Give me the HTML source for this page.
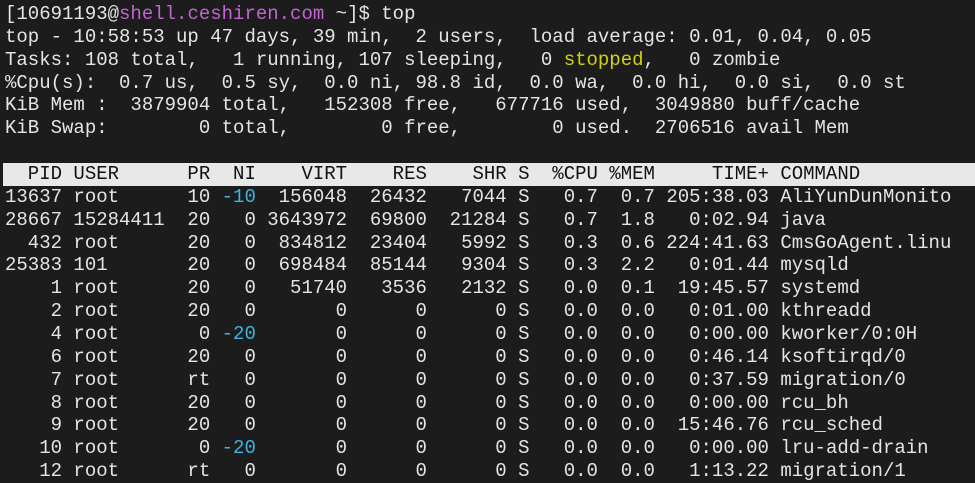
<!DOCTYPE html>
<html><head><meta charset="utf-8"><style>
html,body{margin:0;padding:0;background:#1c1c1c;width:975px;height:465px;overflow:hidden}
pre{margin:0;position:absolute;left:5px;top:3px;font-family:"Liberation Mono","DejaVu Sans Mono",monospace;font-size:19px;line-height:22.86px;color:#e4e4e4;white-space:pre}
.p{color:#c463d4}.y{color:#d4d400}.c{color:#3cb4e4}
.h{display:inline-block;background:#e8e8e8;color:#111;width:972px;margin-left:-2px;padding-left:2px}
</style></head><body>
<pre>[10691193@<span class="p">shell.ceshiren.com</span> ~]$ top
top - 10:58:53 up 47 days, 39 min,  2 users,  load average: 0.01, 0.04, 0.05
Tasks: 108 total,   1 running, 107 sleeping,   0 <span class="y">stopped</span>,   0 zombie
%Cpu(s):  0.7 us,  0.5 sy,  0.0 ni, 98.8 id,  0.0 wa,  0.0 hi,  0.0 si,  0.0 st
KiB Mem :  3879904 total,   152308 free,   677716 used,  3049880 buff/cache
KiB Swap:        0 total,        0 free,        0 used.  2706516 avail Mem

<span class="h">  PID USER      PR  NI    VIRT    RES    SHR S  %CPU %MEM     TIME+ COMMAND</span>
13637 root      10 <span class="c">-10</span>  156048  26432   7044 S   0.7  0.7 205:38.03 AliYunDunMonito
28667 15284411  20   0 3643972  69800  21284 S   0.7  1.8   0:02.94 java
  432 root      20   0  834812  23404   5992 S   0.3  0.6 224:41.63 CmsGoAgent.linu
25383 101       20   0  698484  85144   9304 S   0.3  2.2   0:01.44 mysqld
    1 root      20   0   51740   3536   2132 S   0.0  0.1  19:45.57 systemd
    2 root      20   0       0      0      0 S   0.0  0.0   0:01.00 kthreadd
    4 root       0 <span class="c">-20</span>       0      0      0 S   0.0  0.0   0:00.00 kworker/0:0H
    6 root      20   0       0      0      0 S   0.0  0.0   0:46.14 ksoftirqd/0
    7 root      rt   0       0      0      0 S   0.0  0.0   0:37.59 migration/0
    8 root      20   0       0      0      0 S   0.0  0.0   0:00.00 rcu_bh
    9 root      20   0       0      0      0 S   0.0  0.0  15:46.76 rcu_sched
   10 root       0 <span class="c">-20</span>       0      0      0 S   0.0  0.0   0:00.00 lru-add-drain
   12 root      rt   0       0      0      0 S   0.0  0.0   1:13.22 migration/1
</pre>
</body></html>
